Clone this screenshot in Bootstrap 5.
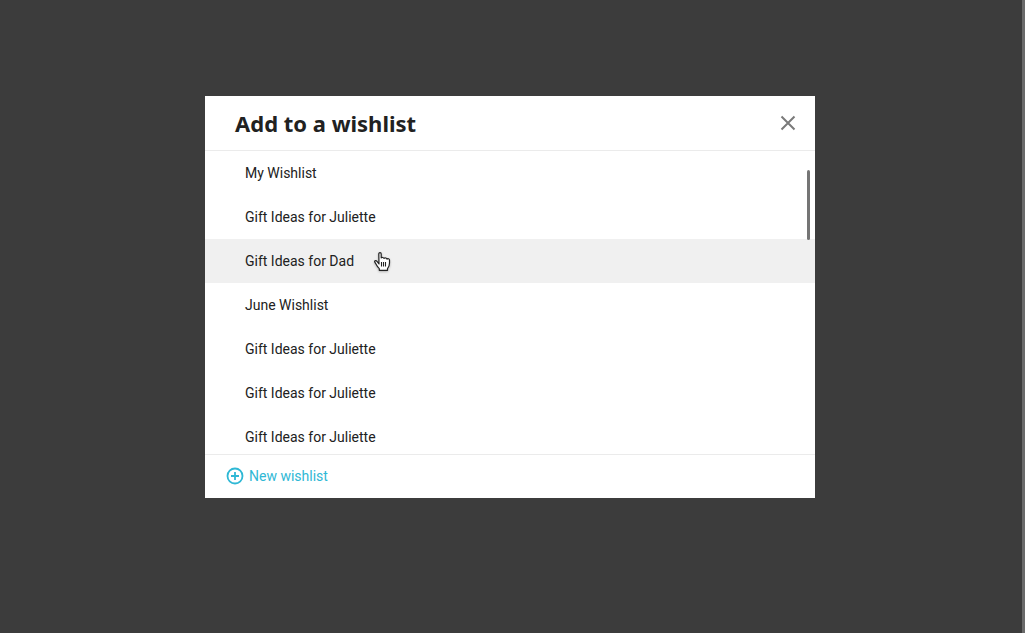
<!DOCTYPE html>
<html lang="en">
<head>
<meta charset="utf-8">
<meta name="viewport" content="width=device-width, initial-scale=1">
<title>Add to a wishlist</title>
<link href="https://cdn.jsdelivr.net/npm/bootstrap@5.3.0/dist/css/bootstrap.min.css" rel="stylesheet">
<script src="https://cdn.jsdelivr.net/npm/bootstrap@5.3.0/dist/js/bootstrap.bundle.min.js" defer></script>
<style>
  body { background: #3c3c3c; color: #212121; font: 14px/20px Roboto, "Liberation Sans", sans-serif; }
  .page { border-right: 3px solid #6a6a6a; padding: 96px 18px 16px 16px; }
  .wishlist-dialog { width: 100%; max-width: 610px; }
  .wishlist-head { padding: 12px 16px 12px 30px; border-bottom: 1px solid #ebebeb; }
  .wishlist-title { font: 700 22px/30px "Noto Sans", "Open Sans", sans-serif; }
  .close-btn { width: 22px; height: 22px; color: #7a7a7a; }
  .wishlist-scroll { max-height: 303px; scrollbar-width: none; }
  .wishlist-scroll::-webkit-scrollbar { display: none; }
  .wishlist-item { --bs-list-group-color: #212121; --bs-list-group-action-color: #212121; padding: 12px 40px; }
  .wishlist-item.hovered { background: #f0f0f0; }
  .scroll-thumb { top: 19px; right: 5px; width: 3px; height: 70px; border-radius: 2px; background: #757575; }
  .hand { top: 11px; left: 167px; filter: drop-shadow(0 1px 1px rgba(0, 0, 0, .25)); }
  .wishlist-foot { padding: 11px 20px 12px; border-top: 1px solid #ebebeb; }
  .new-btn { color: #2fb8d5; gap: 4px; }
</style>
</head>
<body>
<main class="page min-vh-100">
  <section class="wishlist-dialog bg-white mx-auto" role="dialog" aria-labelledby="dialog-title">
    <header class="wishlist-head d-flex align-items-center justify-content-between">
      <h1 class="wishlist-title m-0" id="dialog-title">Add to a wishlist</h1>
      <button type="button" class="close-btn btn p-0 border-0 d-flex" aria-label="Close">
        <svg width="22" height="22" viewBox="0 0 22 22" fill="none" stroke="currentColor" stroke-width="2" stroke-linecap="butt" aria-hidden="true"><path d="M4.500 4.500l13 13M17.500 4.500l-13 13"/></svg>
      </button>
    </header>
    <div class="position-relative">
      <div class="wishlist-scroll overflow-auto">
        <div class="list-group list-group-flush">
          <button type="button" class="wishlist-item list-group-item list-group-item-action border-0">My Wishlist</button>
          <button type="button" class="wishlist-item list-group-item list-group-item-action border-0">Gift Ideas for Juliette</button>
          <button type="button" class="wishlist-item hovered list-group-item list-group-item-action border-0">Gift Ideas for Dad
            <svg class="hand position-absolute" width="20" height="22" viewBox="0 0 20 22" aria-hidden="true">
              <path d="M7 14 5 11.300C4.300 10.400 2.600 10.500 2.600 11.500 2.600 12.100 3.400 12.900 3.800 13.700 5 16 5.700 17.300 7.300 18.600V20.300H15.500V18.600C17 16.800 17.500 15 17.500 12.900V10C17.500 8.600 15.700 8.300 15 9.100 14.800 7.900 12.800 7.600 12 8.400 11.600 7.400 9.900 7.200 9.200 7.800V4C9.200 2.200 6.800 2.200 6.800 4Z" fill="#fff" stroke="#222" stroke-width="1.200" stroke-linejoin="round"/>
              <path d="M9.500 12v4.500M11.500 12v4.500M13.500 12v4.500" stroke="#222" stroke-width="1.100" fill="none"/>
            </svg>
          </button>
          <button type="button" class="wishlist-item list-group-item list-group-item-action border-0">June Wishlist</button>
          <button type="button" class="wishlist-item list-group-item list-group-item-action border-0">Gift Ideas for Juliette</button>
          <button type="button" class="wishlist-item list-group-item list-group-item-action border-0">Gift Ideas for Juliette</button>
          <button type="button" class="wishlist-item list-group-item list-group-item-action border-0">Gift Ideas for Juliette</button>
        </div>
      </div>
      <div class="scroll-thumb position-absolute z-3"></div>
    </div>
    <footer class="wishlist-foot">
      <button type="button" class="new-btn bg-transparent p-0 border-0 d-flex align-items-center">
        <svg width="20" height="20" viewBox="0 0 20 20" fill="none" stroke="currentColor" stroke-width="1.800" aria-hidden="true"><circle cx="10" cy="10" r="7.500"/><path d="M10 6v8M6 10h8"/></svg>
        <span>New wishlist</span>
      </button>
    </footer>
  </section>
</main>
</body>
</html>
